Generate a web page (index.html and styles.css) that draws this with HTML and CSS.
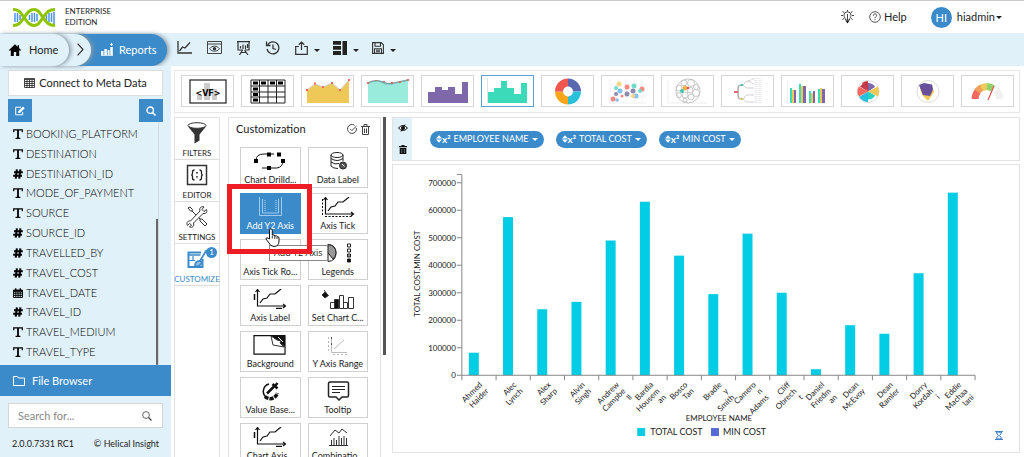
FILE: index.html
```html
<!DOCTYPE html>
<html lang="en">
<head>
	<meta charset="utf-8">
	<meta name="viewport" content="width=device-width, initial-scale=1">
	<title>Helical Insight - Reports</title>
	<link rel="stylesheet" href="styles.css">
</head>
<body>

<!-- shared icons -->
<svg class="defs" aria-hidden="true">
	<symbol id="i-text" viewBox="0 0 10 10"><path d="M.7 3.200V.9h8.600v2.300M2.600 9.300h4.800" fill="none" stroke="currentColor" stroke-width="1.200"/><path d="M5 .9v8.400" stroke="currentColor" stroke-width="1.800"/></symbol>
	<symbol id="i-hash" viewBox="0 0 10 10"><path d="M3.900.300 2.700 9.700M7.400.300l-1.200 9.400M1 3.200h8.800M.2 6.800H9" fill="none" stroke="currentColor" stroke-width="2.100"/></symbol>
	<symbol id="i-date" viewBox="0 0 10 10"><path d="M.5 2h9v7.5h-9zM.5 4h9M.5 5.800h9M.5 7.600h9M2.800 4v5.500M5 4v5.500M7.200 4v5.500" fill="none" stroke="currentColor" stroke-width=".9"/><path d="M.5 2h9v1.800h-9zM2 .3h1.400v2H2zM6.600.3H8v2H6.600z" fill="currentColor"/></symbol>
	<symbol id="i-axis" viewBox="0 0 34 20"><path d="M4.500 1v16H32M2.500 3l2-2.500 2 2.500M30 15l2.500 2-2.500 2" fill="none" stroke="#111" stroke-width="1.200"/><path d="M7 14l3-4 4-1 3-4h5l6-5" fill="none" stroke="#111" stroke-width="1.200"/></symbol>
	<symbol id="i-search" viewBox="0 0 10 10"><path d="M6.700 6.700 9.500 9.500" stroke="currentColor" stroke-width="1.600"/><circle cx="4.200" cy="4.200" r="3.200" fill="none" stroke="currentColor" stroke-width="1.400"/></symbol>
	<symbol id="i-sort" viewBox="0 0 8 10"><path d="M0 4.200 4 0l4 4.200zM0 5.800 4 10l4-4.200z" fill="currentColor"/></symbol>
</svg>

<header class="top">
	<a class="brand" href="#">
		<svg width="44" height="21" viewBox="0 0 44 21">
			<path d="M3 6v9M5.500 6v9M8 8v5M17.500 8v5M20 6v9M22.500 6v9M25 7v7M34.500 8v5M37 6v9M39.500 6v9M42 5v12" stroke="#4c93e8" stroke-width="1.500"/>
			<path d="M1 18.500c7 0 8-4 11-8s5-8 10-8 6 4 9 8 5 8 12 8" fill="none" stroke="#8fc400" stroke-width="3"/>
			<path d="M1 2.500c7 0 8 4 11 8s5 8 10 8 6-4 9-8 5-8 12-8" fill="none" stroke="#8fc400" stroke-width="3"/>
		</svg>
		<span>ENTERPRISE<br>EDITION</span>
	</a>
	<nav class="user">
		<button class="plain" aria-label="Hints">
			<svg width="13" height="14" viewBox="0 0 13 14"><path d="M4.500 10C4.500 8 3 7.500 3 5.300a3.500 3.500 0 0 1 7 0C10 7.500 8.500 8 8.500 10zM6.500 4v6M6.500 0v1.500M0 5.500h2M11 5.500h2M1.500 1.500l1.500 1M11.500 1.500 10 2.500M1.500 9.500 3 8.500M11.500 9.500 10 8.500" fill="none" stroke="#444"/><path d="M4.500 10.500h4l-2 3z" fill="#111"/></svg>
		</button>
		<a class="help" href="#">
			<svg width="12" height="12" viewBox="0 0 12 12"><circle cx="6" cy="6" r="5.300" fill="none" stroke="#444" stroke-width=".9"/><path d="M4.300 4.700c0-2.400 3.500-2.200 3.400-.1C7.600 5.800 6 5.800 6 7.300M6 8.300v1" fill="none" stroke="#333" stroke-width=".9"/></svg>
			Help
		</a>
		<button class="plain account"><span class="avatar">HI</span>hiadmin<i class="caret"></i></button>
	</nav>
</header>

<div class="toolbar">
	<nav class="crumbs">
		<a class="crumb home" href="#">
			<svg width="12" height="12" viewBox="0 0 12 12"><path d="M6 .3 0 6l.9.9.9-.8V12h3V8h2.400v4h3V6.100l.9.800.9-.9-2-1.900V1.200H8.600v1.500z" fill="#000"/></svg>
			Home
		</a>
		<span class="crumb arrow"><svg width="7" height="13" viewBox="0 0 7 13"><path d="M.6.600 6 6.500.6 12.400" fill="none" stroke="#333" stroke-width="1.200"/></svg></span>
		<a class="crumb current" href="#">
			<svg width="13" height="13" viewBox="0 0 13 13"><path d="M0 8h2.500v4H0zM3.300 6h2.500v6H3.300zM6.600 7h2v5h-2zM9.300 4h2.500v8H9.300zM0 12.200h12v.8H0zM10 0h1v3h-1zM9 1h3v1H9z" fill="#fff"/></svg>
			Reports
		</a>
	</nav>
	<div class="tools">
		<button class="plain" aria-label="Chart"><svg width="15" height="13" viewBox="0 0 15 13"><path d="M1 0v12h14M2.500 10l3-4 2.500 1 5-5.500" fill="none" stroke="#333" stroke-width="1.300"/></svg></button>
		<button class="plain" aria-label="Preview"><svg width="15" height="13" viewBox="0 0 15 13"><path d="M.5.500h14v12H.5zM.5 3h14M2.500 7.800c2.500-3.500 7.500-3.500 10 0-2.500 3.200-7.500 3.200-10 0z" fill="none" stroke="#444"/><circle cx="7.500" cy="7.700" r="1.700" fill="#333"/></svg></button>
		<button class="plain" aria-label="Present"><svg width="13" height="14" viewBox="0 0 13 14"><path d="M0 .700h13M1 1v8h5M12 1v8H8M3.500 7.500V5M6 8V3.500M8.500 8V4.500M10.500 7V3M5.500 9 2.500 14M7.500 9l3.500 5M4 11.500h5.500" fill="none" stroke="#333" stroke-width="1.200"/></svg></button>
		<button class="plain" aria-label="History"><svg width="15" height="14" viewBox="0 0 15 14"><path d="M2.500 4.200A6 6 0 1 1 2 8M1.500.500v4h4M8 3.500v4l3 1" fill="none" stroke="#333" stroke-width="1.300"/></svg></button>
		<button class="plain" aria-label="Export"><svg width="13" height="14" viewBox="0 0 13 14"><path d="M4 5.500H.7v7.800h11.600V5.500H9M6.500 9V1M3.700 3.700 6.500 1l2.800 2.700" fill="none" stroke="#333" stroke-width="1.200"/></svg><i class="caret"></i></button>
		<button class="plain" aria-label="Layout"><svg width="14" height="14" viewBox="0 0 14 14"><path d="M0 0h8v3.700H0zM0 5h8v3.700H0zM0 10h8v4H0zM9.500 0H14v14H9.500z" fill="#222"/></svg><i class="caret"></i></button>
		<button class="plain" aria-label="Save"><svg width="12" height="12" viewBox="0 0 12 12"><path d="M.6.600h8.600l2.200 2.200v8.600H.6zM3 .600v3.600h5.500V.600M2.500 11.400V6.800h7v4.600M4 8.300h4M4 9.800h4" fill="none" stroke="#333" stroke-width="1.100"/></svg><i class="caret"></i></button>
	</div>
</div>

<div class="page">
	<aside class="sidebar">
		<button class="connect"><svg width="11" height="10" viewBox="0 0 11 10"><path d="M.5.500h10v9H.5zM0 1.500h11M.5 3.500h10M.5 5.500h10M.5 7.500h10M3 2v8M5.500 2v8M8 2v8" fill="none" stroke="#333" stroke-width=".9"/></svg>Connect to Meta Data</button>
		<div class="pair">
			<button class="blue" aria-label="Edit"><svg width="10" height="10" viewBox="0 0 10 10"><path d="M6 1.200H.7v7.600h7V6" fill="none" stroke="#fff"/><path d="M3.200 7V5.200L8 .500 9.700 2.200 5 7z" fill="#fff"/></svg></button>
			<button class="blue" aria-label="Search fields"><svg width="10" height="10"><use href="#i-search"/></svg></button>
		</div>
		<ul class="fields">
			<li><svg><use href="#i-text"/></svg>BOOKING_PLATFORM</li>
			<li><svg><use href="#i-text"/></svg>DESTINATION</li>
			<li><svg><use href="#i-hash"/></svg>DESTINATION_ID</li>
			<li><svg><use href="#i-text"/></svg>MODE_OF_PAYMENT</li>
			<li><svg><use href="#i-text"/></svg>SOURCE</li>
			<li><svg><use href="#i-hash"/></svg>SOURCE_ID</li>
			<li><svg><use href="#i-hash"/></svg>TRAVELLED_BY</li>
			<li><svg><use href="#i-hash"/></svg>TRAVEL_COST</li>
			<li><svg><use href="#i-date"/></svg>TRAVEL_DATE</li>
			<li><svg><use href="#i-hash"/></svg>TRAVEL_ID</li>
			<li><svg><use href="#i-text"/></svg>TRAVEL_MEDIUM</li>
			<li><svg><use href="#i-text"/></svg>TRAVEL_TYPE</li>
		</ul>
		<button class="browser"><svg width="12" height="10" viewBox="0 0 12 10"><path d="M.5 9.500v-9h4l1 1.500h6v7.500z" fill="none" stroke="#fff"/></svg>File Browser</button>
		<div class="search">
			<input type="text" placeholder="Search for..." aria-label="Search for">
			<button class="plain" aria-label="Search"><svg width="10" height="10" viewBox="0 0 10 10"><circle cx="4" cy="4" r="3.400" fill="none" stroke="#555" stroke-width=".9"/><path d="m6.500 6.500 3 3" stroke="#444" stroke-width="1.200"/></svg></button>
		</div>
		<footer><span>2.0.0.7331 RC1</span><span>© Helical Insight</span></footer>
	</aside>

	<main>
		<div class="types">
			<button aria-label="Custom VF"><svg viewBox="0 0 51 30"><path d="M15 19h5v5h-5zM22 7h6v17h-6zM30 13h5v11h-5z" fill="#ccc"/><rect x="8" y="4" width="36" height="23" fill="none" stroke="#333" stroke-width="1.300"/><text x="26" y="20" class="vf">&lt;VF&gt;</text></svg></button>
			<button aria-label="Table"><svg viewBox="0 0 51 30"><path d="M9 4h34v23H9zM9 10h34M9 16h34M9 21h34M17.500 4v23M26 4v23M34.500 4v23" fill="none" stroke="#222"/><path d="M11 5.500h5v3h-5zM19 5.500h5v3h-5zM28 5.500h5v3h-5zM36 5.500h5v3h-5zM11 11.500h5v3h-5zM11 17h5v3h-5zM11 22.500h5v3h-5z" fill="#000"/></svg></button>
			<button aria-label="Area"><svg viewBox="0 0 51 30"><path d="M5 14l8-6 8 3 9-4 8 7 9-10v23H5z" fill="#eec958"/><path d="M5 14l8-6 8 3 9-4 8 7 9-10" fill="none" stroke="#ccc"/><path d="M4 13h2v2H4zM12 6.500h2v2h-2zM20 10h2v2h-2zM29 6h2v2h-2zM37 13h2v2h-2zM46 3h2v2h-2z" fill="#f3685f"/></svg></button>
			<button aria-label="Spline area"><svg viewBox="0 0 51 30"><path d="M6 7q8-4 14-1t12 1l14-3v23H6z" fill="#99ecdb"/><path d="M6 7q8-4 14-1t12 1l14-3" fill="none" stroke="#77a6a8" stroke-width="1.500"/><path d="M5 6h2v2H5zM13 4h2v1h-2zM21 5h2v1h-2zM29 6h2v2h-2zM37 5h2v2h-2zM45 3h2v2h-2z" fill="#f3685f"/></svg></button>
			<button aria-label="Step area"><svg viewBox="0 0 51 30"><path d="M6 27V16h7v-5h7v3h6v-3h7v7h7V6h6v21z" fill="#7e68a9"/></svg></button>
			<button class="selected" aria-label="Histogram"><svg viewBox="0 0 51 30"><path d="M5.500 2v25" stroke="#e4e4e4"/><path d="M6 27V16h6v-4h7V5h6v7h7v6h7V7h6v20z" fill="#3bdab9"/></svg></button>
			<button aria-label="Donut"><svg viewBox="0 0 51 30" fill="none" stroke-width="8"><path d="M26 6.500a9 9 0 0 1 9 9" stroke="#5a68b0"/><path d="M35 15.500a9 9 0 0 1-9 9" stroke="#29c1da"/><path d="M26 24.500a9 9 0 0 1-9-9" stroke="#f9a61a"/><path d="M17 15.500a9 9 0 0 1 9-9" stroke="#f25650"/></svg></button>
			<button aria-label="Scatter"><svg viewBox="0 0 51 30"><path d="M8 3v24h36M8 9h36M8 15h36M8 21h36M16 3v24M24 3v24M32 3v24M40 3v24" fill="none" stroke="#f1f1f1"/><g fill="#f58a83"><circle cx="11" cy="23" r="2.500"/><circle cx="25" cy="11" r="2.500"/><circle cx="40" cy="13" r="2.500"/><circle cx="20" cy="20" r="1.500"/></g><g fill="#72dcca"><circle cx="14" cy="12" r="2"/><circle cx="32" cy="10" r="2.500"/><circle cx="38" cy="15" r="2"/></g><g fill="#82c4ef"><circle cx="18" cy="15" r="2.500"/><circle cx="34" cy="20" r="2.500"/><circle cx="15" cy="24" r="1.800"/></g><g fill="#8f8aae"><circle cx="25" cy="18" r="2.500"/><circle cx="31" cy="15" r="2.500"/><circle cx="14" cy="18" r="2"/></g><circle cx="17" cy="8" r="2.500" fill="#f4d684"/><circle cx="31" cy="20" r="2" fill="#f4d684"/></svg></button>
			<button aria-label="Circle pack"><svg viewBox="0 0 51 30"><path d="M6 4v23h39" fill="none" stroke="#eee"/><g fill="none" stroke="#bbb" stroke-width=".8"><circle cx="26" cy="15" r="12"/><circle cx="22" cy="7" r="3"/><circle cx="29" cy="7" r="3.500"/><circle cx="34" cy="11" r="2.500"/><circle cx="17" cy="12" r="3"/><circle cx="28" cy="14" r="3"/><circle cx="34" cy="17" r="3.500"/><circle cx="17" cy="19" r="2.500"/><circle cx="23" cy="19" r="3"/><circle cx="29" cy="21" r="3"/><circle cx="23" cy="24" r="2"/></g><circle cx="23" cy="12" r="2.500" fill="#f0b34c"/><circle cx="20" cy="15" r="2" fill="#3cc9b3"/><circle cx="26" cy="12" r="1.300" fill="#e5554f"/></svg></button>
			<button aria-label="Dendrogram"><svg viewBox="0 0 51 30" fill="none"><path d="M20 9c-4 0-4 1-4 7s0 7 4 7" stroke="#aaa" stroke-width="1.500"/><path d="M20 9c4 0 1-4 6-4M20 9c4 0 1 3 6 3M20 23c4 0 1-4 6-4M20 23c4 0 1 3 6 3M26 5c4 0 2-2 6-2M26 5c4 0 2 3 6 3M26 12h6M26 19h6M26 26h6" stroke="#bbb" stroke-width=".7"/><path d="M34 2v26M38 2v26" stroke="#e3e8ed" stroke-dasharray="1 1" stroke-width="3"/><path d="M12 16h4" stroke="#e66" stroke-width="2"/><path d="M19 9h2" stroke="#3cc9b3" stroke-width="2"/><path d="M19 23h2" stroke="#eec958" stroke-width="2"/></svg></button>
			<button aria-label="Grouped bars"><svg viewBox="0 0 51 30"><path d="M5.500 4v23" stroke="#eee"/><path d="M8 12h2v15H8zM17 8h2v19h-2zM27 15h2v12h-2zM36 13h2v14h-2z" fill="#3bdab9"/><path d="M10 14h2v13h-2zM19 10h2v17h-2zM29 17h2v10h-2zM38 12h2v15h-2z" fill="#eec958"/><path d="M12 14h2v13h-2zM21 10h3v17h-3zM31 15h2v12h-2zM40 13h3v14h-3z" fill="#7e68a9"/></svg></button>
			<button aria-label="Polar"><svg viewBox="0 0 51 30"><circle cx="26" cy="15.500" r="11" fill="none" stroke="#ddd"/><path d="M26 15.500 20 7q3-2 6-2z" fill="#c23a47"/><path d="M26 15.500V7q5 0 7 4z" fill="#7e68a9"/><path d="m26 15.500 10-5q2 5 0 10z" fill="#eec958"/><path d="m26 15.500 7 4q-2 4-7 4z" fill="#26d3c0"/><path d="M26 15.500V26q-5 0-9-5z" fill="#29c1da"/><path d="m26 15.500-9 5q-3-5 0-10z" fill="#f3685f"/><path d="m26 15.500-8-5 3-3z" fill="#c23a47"/></svg></button>
			<button aria-label="Radar"><svg viewBox="0 0 51 30"><circle cx="26" cy="15.500" r="11" fill="#fff" stroke="#ddd"/><path d="m18 12 12-2 2 6-6 9-6-6z" fill="#eec958"/><path d="m17 9 5-2 8 1.500 1 5-3 6.500-7-1z" fill="#67509b"/></svg></button>
			<button aria-label="Gauge"><svg viewBox="0 0 51 30" fill="none" stroke-width="7"><path d="M13 23a13 13 0 0 1 3-8" stroke="#f3685f"/><path d="M15 15.500a13 13 0 0 1 5-4" stroke="#f0a05c"/><path d="M19.500 12a13 13 0 0 1 6-1.500" stroke="#ecca5c"/><path d="M25 10.500a13 13 0 0 1 6 2" stroke="#8fd26b"/><path d="M34 14.500a13 13 0 0 1 4 8.500" stroke="#f0f0ee"/><path d="m26 24 6-14" stroke="#e5554f" stroke-width="1.200"/></svg></button>
		</div>

		<div class="work">
			<nav class="tabs">
				<button><svg width="22" height="22" viewBox="0 0 22 22"><ellipse cx="11" cy="3.500" rx="9" ry="2.800" fill="#fff" stroke="#333"/><path d="M2 4.500q9 4 18 0l-6.500 8v6l-5 3v-9z" fill="#333"/></svg>FILTERS</button>
				<button><svg width="22" height="22" viewBox="0 0 22 22"><rect x="1.500" y="1.500" width="19" height="19" fill="none" stroke="#333" stroke-width="1.500"/><path d="M8.500 6q-2 0-2 2v1.500q0 1.500-1.300 1.500 1.300 0 1.300 1.500V14q0 2 2 2M13.500 6q2 0 2 2v1.500q0 1.500 1.300 1.500-1.300 0-1.300 1.500V14q0 2-2 2" fill="none" stroke="#222" stroke-width="1.300"/><path d="M10.200 8h1.600v1.600h-1.600zM10.200 12h1.600l-.8 3z" fill="#222"/></svg>EDITOR</button>
				<button><svg width="22" height="22" viewBox="0 0 22 22" fill="none" stroke="#333"><path d="M2 2l2-1 2.500 2.500-.5 1.500 8 8 2 0 5 5-2 2-5-5v-2l-8-8-1.500 0z"/><path d="M20.500 3.500 18 5.500l-2-2 2-2.500c-3-1-5 1-4 4L4.500 15c-3-.5-4.500 2-3 4.500l2-2 2 1.500-2 2c3 1 5-1 4-4L17 7.500c3 .5 4.500-1.500 3.500-4z" fill="#fff"/></svg>SETTINGS</button>
				<button class="active"><span class="badge">1</span><svg width="22" height="22" viewBox="0 0 22 22"><path d="M16.500 11v8H2.500V4.500H15" fill="none" stroke="#3b8bca" stroke-width="2"/><path d="M2.500 7h12" stroke="#3b8bca" stroke-width="1.500"/><path d="M7 8v5M3 12.500h6" stroke="#3b8bca" stroke-width="1.200"/><path d="M20.500 2 14 13M9 18q0-5 4-5t2 3-6 2z" fill="#8fbfe6" stroke="#3b8bca" stroke-width="1.700"/></svg>CUSTOMIZE</button>
			</nav>

			<section class="custom">
				<div class="head">
					<h2>Customization</h2>
					<button class="plain" aria-label="Apply"><svg width="10" height="10" viewBox="0 0 10 10" fill="none" stroke="#444"><path d="M9.400 4A4.500 4.500 0 1 1 7.500 1.200M3 4.800l1.800 1.800L9.500 2"/></svg></button>
					<button class="plain" aria-label="Delete"><svg width="9" height="11" viewBox="0 0 9 11" fill="none" stroke="#444"><path d="M0 2.500h9M3 2V.500h3V2M1.500 3v7.500h6V3M3.500 4.500v4.500M5.500 4.500v4.500"/></svg></button>
				</div>
				<ul class="options">
					<li><button><svg viewBox="0 0 34 20"><path d="M21 3H11Q3 3 3 9.500M9 17h15q6-1 6-7.500" fill="none" stroke="#111"/><path d="M14 1.500h4v4h-4zM24 1.500h4v4h-4zM1 8h4v4H1zM28 8h4v4h-4zM14 15h4v4h-4z" fill="#000"/></svg>Chart Drilld...</button></li>
					<li><button><svg viewBox="0 0 34 20" fill="none" stroke="#222"><ellipse cx="16" cy="4" rx="6" ry="2.500"/><path d="M10 4v11q2 2.500 7 2.500M22 4v6M10 7.500q6 4 12 0M10 11q4 3 8 1.500"/><circle cx="22" cy="14.500" r="3.500" fill="#555"/><path d="m21 13 2.500 2.500" stroke="#fff"/></svg>Data Label</button></li>
					<li>
						<button class="on"><svg viewBox="0 0 34 20" fill="none" stroke="#b9dbf5"><path d="M6.500 0v18.500h22V0M9.500 2v14h16V2" stroke-width=".8"/><path d="M12 3v11M23 3v11" stroke-dasharray="1 1"/></svg>Add Y2 Axis</button>
						<div class="tip">Add Y2 Axis</div>
						<div class="mark"></div>
						<svg class="hand" width="15" height="19" viewBox="0 0 15 19"><path d="M4.500 11V2.200a1.400 1.400 0 0 1 2.800 0V7q2.500-.8 2.600 1 2-.8 2.300.7 1.800-.3 1.800 1.300V13q0 5-4 5.300H8Q5.500 18 4 15L1 11q0-2.500 3.500 0z" fill="#fff" stroke="#111"/><path d="M7.300 7.500v3M9.800 8v3M12 9v2" stroke="#111" stroke-width=".8"/></svg>
					</li>
					<li><button><svg viewBox="0 0 34 20"><use href="#i-axis"/><path d="M1.500 2v16M4 19.500h28" stroke="#111" stroke-dasharray="2 1.500"/></svg>Axis Tick</button></li>
					<li><button><svg viewBox="0 0 34 20"><path d="m22 8 4 5M20 9l5 1" stroke="#bbb" fill="none"/></svg>Axis Tick Ro...</button></li>
					<li><button><svg viewBox="0 0 34 20" fill="none" stroke="#222"><path d="M7 1.500q8 .5 8 8.500t-8 8.500z" fill="#eee"/><path d="M7 10V1.500q8 1 8 8.500-.5 4-3 6z" fill="#999"/><path d="M26.500 1h3v3h-3zM26.500 6h3v3h-3z"/><path d="M26.500 11h3v3h-3z" fill="#999"/><path d="M26.500 16h3v3h-3z" fill="#000"/></svg>Legends</button></li>
					<li><button><svg viewBox="0 0 34 20"><use href="#i-axis"/><path d="M1.500 5v6M23 19.500h6" stroke="#111" stroke-width="1.500"/></svg>Axis Label</button></li>
					<li><button><svg viewBox="0 0 34 20" fill="none" stroke="#333"><path d="m1 6 3-3 3.500 3.500L4 9zM3 1l3 4" fill="#111"/><path d="M9.500 13.500h4v6h-4zM18.500 6.500h4v13h-4zM22.500 13.500h4v6h-4zM27.500 8.500h5v11h-5z"/><path d="M13.500 10.500h4v9h-4z" fill="#111"/></svg>Set Chart C...</button></li>
					<li><button><svg viewBox="0 0 34 20"><path d="M1 .700h31v18.500H1z" fill="#fff" stroke="#111" stroke-width="1.200"/><path d="M18 1h14v11z" fill="#111"/><path d="m18 1 2 9 11 2-4-4 1-2-4-1z" fill="#fff" stroke="#333"/><path d="m25 2 5 5" stroke="#fff"/></svg>Background</button></li>
					<li><button><svg viewBox="0 0 34 20" fill="none" stroke="#bbb"><path d="M10.500 2v15.500H26M13 14 23 5"/><path d="M7.500 2v16M12 19.500h14" stroke-dasharray="2 2"/><path d="M10.500 2v12" stroke="#555" stroke-dasharray="2 4"/></svg>Y Axis Range</button></li>
					<li><button><svg viewBox="0 0 34 20" fill="none" stroke="#111"><path d="M16 3A7.500 7.500 0 0 0 13 16" stroke-width="1.500"/><path d="M12 15.500A7.500 7.500 0 0 0 24.500 12" stroke-width="3.500" stroke-dasharray="4 1"/><path d="m14 12.500 7-7" stroke-width="2.500"/><path d="m19.500 3 5 4.500M22 5l2.500-3" stroke-width="2.500"/></svg>Value Base...</button></li>
					<li><button><svg viewBox="0 0 34 20" fill="none" stroke="#222"><path d="M9 1h17q1.500 0 1.500 1.500v12Q27.500 16 26 16h-5l-3 3-3-3H9q-1.500 0-1.500-1.500v-12Q7.500 1 9 1z" stroke-width="1.500"/><path d="M11 5.500h13M11 8.500h13M11 11.500h8"/></svg>Tooltip</button></li>
					<li><button><svg viewBox="0 0 34 20"><use href="#i-axis"/><path d="M1.500 5v6M23 19.500h6" stroke="#111" stroke-width="1.500"/></svg>Chart Axis...</button></li>
					<li><button><svg viewBox="0 0 34 20" fill="none" stroke="#333"><path d="m9 9 5-6 4 3 3-4 5 4M8 18.500h19M10.500 18v-5M13 18v-7M15.500 18v-5M18 18V9M20.500 18v-7M23 18v-9M25.500 18v-7"/></svg>Combinatio...</button></li>
				</ul>
			</section>
			<div class="thumb"></div>

			<div class="right">
				<div class="shelf">
					<div class="strip">
						<button class="plain" aria-label="Hide"><svg width="10" height="8" viewBox="0 0 10 8"><path d="M.5 4q4.500-5 9 0-4.500 5-9 0z" fill="none" stroke="#111"/><circle cx="5" cy="4" r="2" fill="#111"/><path d="m3 7.500 4-7" stroke="#111"/></svg></button>
						<button class="plain" aria-label="Clear"><svg width="8" height="9" viewBox="0 0 8 9"><path d="M0 1h2.500V0h3v1H8v1.200H0zM.7 3h6.600v6H.7z" fill="#111"/><path d="M2.700 4v4M5.300 4v4" stroke="#8aa" stroke-width=".6"/></svg></button>
					</div>
					<div class="pills">
						<button class="pill"><svg width="6" height="8"><use href="#i-sort"/></svg><b>x²</b>EMPLOYEE NAME<i class="caret"></i></button>
						<button class="pill"><svg width="6" height="8"><use href="#i-sort"/></svg><b>x²</b>TOTAL COST<i class="caret"></i></button>
						<button class="pill"><svg width="6" height="8"><use href="#i-sort"/></svg><b>x²</b>MIN COST<i class="caret"></i></button>
					</div>
				</div>
				<div class="chart">
					<svg id="chart" viewBox="0 0 626 288" role="img" aria-label="Total cost and min cost by employee name"></svg>
				</div>
			</div>
		</div>
	</main>
</div>

<script src="chart.js"></script>
</body>
</html>
```

FILE: styles.css
```css
* {
	box-sizing: border-box;
}

body {
	margin: 0;
	height: 100vh;
	display: flex;
	flex-direction: column;
	overflow: hidden;
	background: #fff;
	color: #222;
	font: 11px/14px Lato, "Open Sans", sans-serif;
}

button, input {
	font: inherit;
	color: inherit;
	margin: 0;
	padding: 0;
}

button {
	cursor: pointer;
}

a {
	color: inherit;
	text-decoration: none;
}

ul {
	list-style: none;
	margin: 0;
	padding: 0;
}

svg {
	flex: none;
}

.defs {
	position: absolute;
	width: 0;
	height: 0;
}

.plain {
	border: 0;
	background: none;
	display: flex;
	align-items: center;
}

.caret {
	border: 3px solid transparent;
	border-top-color: currentColor;
	border-bottom: 0;
}

/* header */
.top {
	flex: none;
	height: 33px;
	border-top: 1px solid #ccc;
	padding: 0 22px 0 12px;
	display: flex;
	align-items: center;
	justify-content: space-between;
}

.brand {
	display: flex;
	align-items: center;
	gap: 9px;
	font-size: 8px;
	line-height: 11px;
}

.user, .help, .account {
	display: flex;
	align-items: center;
}

.user {
	gap: 15px;
	font-size: 11px;
}

.help {
	gap: 3px;
}

.account {
	margin-left: 9px;
}

.account .caret {
	margin-left: 1px;
}

.avatar {
	width: 21px;
	height: 21px;
	margin-right: 5px;
	border-radius: 50%;
	background: #3b8bca;
	color: #fff;
	font-size: 11px;
	line-height: 21px;
}

/* toolbar */
.toolbar {
	flex: none;
	height: 33px;
	background: #e1f1fa;
	display: flex;
	align-items: center;
}

.crumbs {
	display: flex;
	height: 32px;
	width: 167px;
}

.crumb {
	display: flex;
	align-items: center;
	border-radius: 0 16px 16px 0;
	background: #e1f1fa;
	box-shadow: 2px 0 4px #8899a5;
}

.crumb.home {
	width: 69px;
	padding-left: 9px;
	gap: 8px;
	z-index: 2;
}

.crumb.arrow {
	width: 38px;
	margin-left: -16px;
	padding-left: 24px;
	z-index: 1;
}

.crumb.current {
	flex: 1;
	margin-left: -16px;
	padding-left: 26px;
	gap: 5px;
	background: #3b8bca;
	color: #fff;
}

.tools {
	display: flex;
	align-items: center;
	gap: 15px;
	padding: 0 0 4px 10px;
	color: #222;
}

.tools .caret {
	margin: 6px 0 0 6px;
}

.tools button:nth-child(n+6) {
	margin-left: -2px;
}

/* sidebar */
.page {
	flex: 1;
	min-height: 0;
	display: flex;
}

.sidebar {
	flex: none;
	width: 171px;
	background: #e1f1fa;
	display: flex;
	flex-direction: column;
}

.connect {
	height: 26px;
	margin: 4px 8px 3px;
	border: 1px solid #ddd;
	background: #fff;
	display: flex;
	align-items: center;
	justify-content: center;
	gap: 4px;
}

.pair {
	display: flex;
	justify-content: space-between;
	padding: 0 8px;
}

.blue {
	width: 24px;
	height: 23px;
	border: 0;
	background: #3b8bca;
	color: #fff;
	display: flex;
	align-items: center;
	justify-content: center;
}

.fields {
	flex: 1;
	min-height: 0;
	margin-right: 12px;
	padding: 2px 0 3px 13px;
	display: flex;
	flex-direction: column;
	background: linear-gradient(#666, #666) right bottom / 2px 60% no-repeat;
	border-right: 1px solid #d0dbe1;
	color: #000;
	font-weight: 300;
}

.fields li {
	flex: 1;
	display: flex;
	align-items: center;
	gap: 3px;
}

.fields svg {
	width: 10px;
	height: 10px;
}

.browser {
	height: 31px;
	border: 0;
	padding-left: 13px;
	background: #3b8bca;
	color: #fff;
	display: flex;
	align-items: center;
	gap: 7px;
}

.search {
	display: flex;
	height: 25px;
	margin: 7px 8px 0;
	border: 1px solid #d5d5d5;
	background: #fff;
}

.search input {
	flex: 1;
	min-width: 0;
	border: 0;
	padding-left: 9px;
	background: none;
}

.search input::placeholder {
	color: #888;
}

.search button {
	padding: 0 10px;
}

.sidebar footer {
	height: 29px;
	padding: 3px 12px 0;
	display: flex;
	align-items: center;
	justify-content: space-between;
	font-size: 9px;
}

/* chart types */
main {
	flex: 1;
	min-width: 0;
	padding: 4px 4px 0 3px;
	display: flex;
	flex-direction: column;
	gap: 4px;
}

.types {
	flex: none;
	border: 1px solid #e8e8e8;
	padding: 4px 5px 5px 6px;
	display: flex;
	justify-content: space-between;
}

.types button {
	width: 53px;
	height: 32px;
	border: 1px solid #d5d5d5;
	background: #fff;
}

.types .selected {
	border-color: #5c9fd6;
}

.types svg {
	display: block;
	width: 51px;
	height: 30px;
}

.vf {
	font: bold 8px "DejaVu Sans", sans-serif;
	text-anchor: middle;
}

/* work area */
.work {
	flex: 1;
	min-height: 0;
	display: flex;
}

.tabs {
	width: 46px;
	margin-right: 8px;
	border: 1px solid #e2e2e2;
	border-bottom: 0;
}

.tabs button {
	position: relative;
	width: 44px;
	height: 42px;
	border: 0;
	border-bottom: 1px solid #ddd;
	background: none;
	font-size: 8px;
	line-height: 10px;
	display: flex;
	flex-direction: column;
	align-items: center;
	justify-content: flex-end;
	gap: 4px;
	padding-bottom: 1px;
}

.tabs .active {
	color: #3b8bca;
}

.badge {
	position: absolute;
	top: 3px;
	right: 2px;
	z-index: 1;
	width: 11px;
	height: 11px;
	border-radius: 50%;
	background: #3b8bca;
	color: #fff;
	font-size: 8px;
	line-height: 11px;
	text-align: center;
}

.custom {
	width: 153px;
	border: 1px solid #e2e2e2;
	border-bottom: 0;
	padding: 3px 12px 0 11px;
}

.head {
	display: flex;
	align-items: center;
	gap: 4px;
	height: 16px;
	margin: 0 -2px 10px -4px;
}

.head h2 {
	flex: 1;
	margin: 0;
	font-size: 11px;
	font-weight: normal;
}

.options {
	display: grid;
	grid-template-columns: 1fr 1fr;
	gap: 5px 7px;
}

.options li {
	position: relative;
	min-width: 0;
}

.options button {
	display: block;
	width: 100%;
	height: 41px;
	border: 1px solid #d0d0d0;
	padding: 2px 0 0;
	background: #fff;
	font-size: 9px;
	line-height: 12px;
	white-space: nowrap;
}

.options button svg {
	display: block;
	width: 34px;
	height: 20px;
	margin: 0 auto 3px;
}

.options .on {
	background: #3b8bca;
	border-color: #3b8bca;
	color: #fff;
}

.tip {
	position: absolute;
	left: 29px;
	top: 52px;
	z-index: 1;
	padding: 0 4px;
	border: 1px solid #888;
	background: #fff;
	font: 9px/14px "Open Sans", sans-serif;
	white-space: nowrap;
}

.mark {
	position: absolute;
	left: -13px;
	top: -9px;
	z-index: 2;
	width: 85px;
	height: 70px;
	border: 5px solid #ee1c25;
	pointer-events: none;
}

.hand {
	position: absolute;
	left: 25px;
	top: 35px;
	z-index: 3;
}

.thumb {
	width: 3px;
	height: 238px;
	margin: 0 6px 0 2px;
	background: #555;
}

.right {
	flex: 1;
	min-width: 0;
	display: flex;
	flex-direction: column;
	gap: 3px;
	padding-bottom: 4px;
}

.shelf {
	flex: none;
	height: 44px;
	border: 1px solid #e2e2e2;
	display: flex;
}

.strip {
	width: 19px;
	background: #e1f1fa;
	display: flex;
	flex-direction: column;
	align-items: center;
	justify-content: space-around;
}

.pills {
	display: flex;
	align-items: center;
	gap: 12px;
	padding-left: 18px;
}

.pill {
	height: 17px;
	border: 0;
	border-radius: 9px;
	padding: 0 6px;
	background: #3b8bca;
	color: #fff;
	font-size: 9px;
	display: flex;
	align-items: center;
}

.pill b {
	margin-right: 3px;
	font-size: 10px;
}

.pill .caret {
	margin-left: 3px;
}

.chart {
	flex: 1;
	min-height: 0;
	border: 1px solid #e2e2e2;
}

#chart {
	display: block;
	width: 100%;
	height: 100%;
	font-size: 8px;
	fill: #222;
}

#chart .axis {
	fill: none;
	stroke: #888;
}

#chart .total {
	fill: #03cde4;
}

#chart .min {
	fill: #5569d3;
}

#chart .end {
	text-anchor: end;
}

#chart .mid {
	text-anchor: middle;
}

#chart .legend {
	font-size: 9px;
}

#chart .glass {
	fill: #e1f1fa;
	stroke: #3b7cc4;
}
```

FILE: chart.js
```js
const rows = [
	['Ahmed|Haider', 82000],
	['Alec|Lynch', 575000],
	['Alex|Sharp', 240000],
	['Alvin|Singh', 267000],
	['Andrew|Campbe|ll', 490000],
	['Bardia|Housem|an', 631000],
	['Bosco|Tan', 435000],
	['Bradle|y|Smith', 295000],
	['Camero|n|Adams', 515000],
	['Cliff|Obrech|t', 300000],
	['Daniel|Friedm|an', 22000],
	['Dean|McEvoy', 182000],
	['Dean|Ramler', 151000],
	['Dorry|Kordah|i', 371000],
	['Eddie|Machaa|lani', 664000]
];

const left = 68;
const right = 583;
const base = 211;
const band = (right - left) / rows.length;
const y = v => base - v / 100000 * 27.6;

let out = '';
let ticks = `M${left - 5} 9.5H${left}V${base}H${right}`;

for (let v = 0; v <= 700000; v += 100000) {
	ticks += `M${left - 5} ${y(v)}h5`;
	out += `<text class="end" x="${left - 6}" y="${y(v) + 3}">${v}</text>`;
}

rows.forEach(([name, total], i) => {
	const x = left + band * i;
	out += `<rect class="total" x="${x + 7}" y="${y(total)}" width="10" height="${base - y(total)}"/>`;
	const lines = name.split('|').map((t, n) => `<tspan x="0" y="${n * 9}">${t}</tspan>`).join('');
	out += `<text class="end" transform="translate(${x + 21} 221) rotate(-45)">${lines}</text>`;
});

for (let i = 0; i <= rows.length; i++) {
	ticks += `M${left + band * i} ${base}v5`;
}

out += `<path class="axis" d="${ticks}"/>`;
out += '<text class="mid" transform="translate(26 109) rotate(-90)">TOTAL COST,MIN COST</text>';
out += '<text class="mid" x="326" y="257">EMPLOYEE NAME</text>';
out += '<g class="legend"><rect class="total" x="244" y="264" width="8" height="8"/><text x="257" y="271">TOTAL COST</text>';
out += '<rect class="min" x="318" y="264" width="8" height="8"/><text x="330" y="271">MIN COST</text></g>';
out += '<path class="glass" d="M603 267.5h8M603 275.5h8M604.500 268q0 2 2 3.500-2 1.500-2 3.500h5q0-2-2-3.500 2-1.500 2-3.500z"/>';

document.getElementById('chart').innerHTML = out;
```
